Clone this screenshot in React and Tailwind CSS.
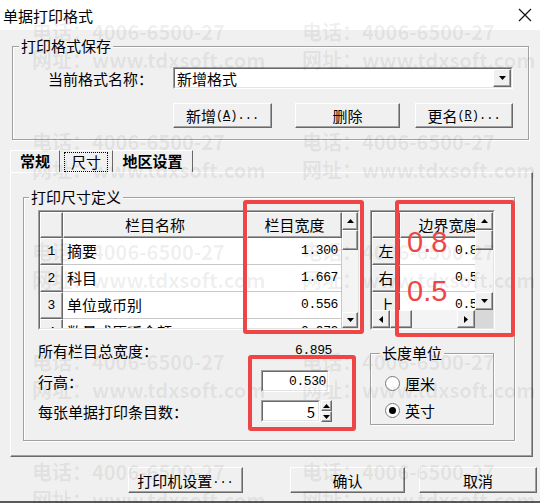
import React from 'react';

const cjk = "font-['Noto_Sans_CJK_SC',sans-serif]";
const mono = "font-['Liberation_Mono',monospace]";
const raised =
  'border border-t-white border-l-white border-r-[#696969] border-b-[#696969] shadow-[inset_-1px_-1px_0_#a0a0a0]';
const etched = 'border border-[#a0a0a0] shadow-[inset_1px_1px_0_#ffffff,1px_1px_0_#ffffff]';

// small black arrow used by scroll buttons, combo and spinner
function Tri({ dir }) {
  const pts = {
    up: '0,4 3.5,0 7,4',
    down: '0,0 7,0 3.5,4',
    left: '4,0 4,7 0,3.5',
    right: '0,0 0,7 4,3.5',
  }[dir];
  const vert = dir === 'up' || dir === 'down';
  return (
    <svg width={vert ? 7 : 4} height={vert ? 4 : 7} viewBox={vert ? '0 0 7 4' : '0 0 4 7'}>
      <polygon points={pts} fill="#000" />
    </svg>
  );
}

function Sunken({ className, children }) {
  return (
    <div className={`border border-t-[#a0a0a0] border-l-[#a0a0a0] border-r-white border-b-white ${className}`}>
      <div className="w-full h-full border border-t-[#696969] border-l-[#696969] border-r-[#e3e3e3] border-b-[#e3e3e3] bg-white overflow-hidden">
        {children}
      </div>
    </div>
  );
}

function Btn({ className, children }) {
  return (
    <div className={`${raised} bg-[#f0f0f0] flex items-center justify-center text-[15px] leading-none ${className}`}>
      {children}
    </div>
  );
}

function ScrollBtn({ dir, className }) {
  return (
    <div className={`${raised} bg-[#f0f0f0] flex items-center justify-center flex-none ${className}`}>
      <Tri dir={dir} />
    </div>
  );
}

function Legend({ children, className }) {
  return (
    <legend className={`px-[2px] bg-[#f0f0f0] text-[15px] leading-[18px] ${className}`}>{children}</legend>
  );
}

function ColumnGrid() {
  const rows = [
    ['1', '摘要', '1.300'],
    ['2', '科目', '1.667'],
    ['3', '单位或币别', '0.556'],
    ['4', '数量或原币金额', '0.972'],
  ];
  return (
    <Sunken className="w-[322px] h-[120px] flex-none">
      <div className="flex h-full">
        <div className="w-[302px] flex-none flex flex-col">
          <div className="flex h-[26px] flex-none">
            <div className={`${raised} w-[23px] bg-[#f0f0f0]`} />
            <div className={`${raised} w-[184px] bg-[#f0f0f0] flex items-center justify-center text-[15px]`}>栏目名称</div>
            <div className={`${raised} w-[95px] bg-[#f0f0f0] flex items-center justify-center text-[15px]`}>栏目宽度</div>
          </div>
          {rows.map(([n, name, val]) => (
            <div key={n} className="flex h-[27px] flex-none">
              <div className={`${raised} w-[23px] bg-[#f0f0f0] flex items-center justify-center text-[13px] ${mono}`}>{n}</div>
              <div className="w-[184px] border-r border-b border-[#c8c8c8] flex items-center pl-[4px] text-[15px] whitespace-nowrap">
                {name}
              </div>
              <div className={`w-[95px] border-r border-b border-[#c8c8c8] flex items-center justify-end pr-[3px] text-[13px] tracking-[-0.4px] ${mono}`}>
                {val}
              </div>
            </div>
          ))}
        </div>
        <div className="w-[16px] flex-none flex flex-col">
          <ScrollBtn dir="up" className="h-[18px]" />
          <div className={`${raised} h-[20px] bg-[#f0f0f0]`} />
          <div className="flex-1 bg-[#f4f4f4]" />
          <ScrollBtn dir="down" className="h-[16px]" />
        </div>
      </div>
    </Sunken>
  );
}

function MarginGrid() {
  const rows = [
    ['左', '0.800'],
    ['右', '0.500'],
    ['上', '0.500'],
  ];
  return (
    <Sunken className="w-[125px] h-[120px] flex-none">
      <div className="flex h-full">
        <div className="w-[103px] flex-none flex flex-col">
          <div className="h-[98px] flex-none overflow-hidden">
            <div className="flex h-[26px] w-[125px]">
              <div className={`${raised} w-[28px] flex-none bg-[#f0f0f0]`} />
              <div className={`${raised} w-[97px] flex-none bg-[#f0f0f0] flex items-center justify-center text-[15px]`}>边界宽度</div>
            </div>
            {rows.map(([side, val]) => (
              <div key={side} className="flex h-[27px] w-[125px]">
                <div className={`${raised} w-[28px] flex-none bg-[#f0f0f0] flex items-center justify-center text-[15px]`}>{side}</div>
                <div className={`w-[97px] flex-none border-b border-[#c8c8c8] flex items-center justify-end pr-[5px] text-[13px] tracking-[-0.4px] ${mono}`}>
                  {val}
                </div>
              </div>
            ))}
          </div>
          <div className="h-[18px] flex-none flex">
            <ScrollBtn dir="left" className="w-[18px]" />
            <div className={`${raised} w-[22px] flex-none bg-[#f0f0f0]`} />
            <div className="flex-1 bg-[#f4f4f4]" />
            <ScrollBtn dir="right" className="w-[18px]" />
          </div>
        </div>
        <div className="w-[18px] flex-none flex flex-col">
          <ScrollBtn dir="up" className="h-[18px]" />
          <div className={`${raised} h-[20px] flex-none bg-[#f0f0f0]`} />
          <div className="flex-1 bg-[#f4f4f4]" />
          <ScrollBtn dir="down" className="h-[18px]" />
          <div className="h-[18px] flex-none bg-[#d8d8d8]" />
        </div>
      </div>
    </Sunken>
  );
}

function Radio({ checked, label, className }) {
  return (
    <div className={`flex items-center h-[20px] ${className}`}>
      <div className="w-[15px] h-[15px] rounded-full border border-[#7a7a7a] bg-white flex items-center justify-center">
        {checked && <div className="w-[7px] h-[7px] rounded-full bg-black" />}
      </div>
      <span className="ml-[5px] text-[15px] leading-none">{label}</span>
    </div>
  );
}

// faint company stamp repeated across the dialog
function Watermark() {
  const tops = [0, 110, 220, 330, 440];
  return (
    <div className={`absolute inset-0 pointer-events-none ${cjk} font-bold text-[20px] leading-[28px] text-black/[0.07]`}>
      {tops.map((t) =>
        [32, 302].map((x) => (
          <React.Fragment key={`${t}-${x}`}>
            <div className="absolute whitespace-nowrap" style={{ left: x, top: 18 + t }}>电话：4006-6500-27</div>
            <div className="absolute whitespace-nowrap" style={{ left: x, top: 46 + t }}>网址：www.tdxsoft.com</div>
          </React.Fragment>
        ))
      )}
    </div>
  );
}

export default function App() {
  return (
    <div className={`relative w-[540px] h-[503px] bg-[#f0f0f0] overflow-hidden text-black ${cjk}`}>
      {/* title bar */}
      <div className="h-[30px] bg-white flex items-center justify-between pl-[3px] pr-[8px]">
        <span className="text-[15px] leading-none">单据打印格式</span>
        <svg width="14" height="14" viewBox="0 0 14 14">
          <path d="M1 1 L13 13 M13 1 L1 13" stroke="#111" strokeWidth="1.2" />
        </svg>
      </div>

      {/* saved formats */}
      <fieldset className={`${etched} ml-[12px] mt-[7px] w-[517px] h-[103px]`}>
        <Legend className="ml-[6px]">打印格式保存</Legend>
        <div className="flex items-center pl-[35px] mt-[12px]">
          <span className="w-[125px] text-[15px] leading-none">当前格式名称：</span>
          <Sunken className="w-[340px] h-[22px]">
            <div className="flex h-full items-center">
              <span className="flex-1 pl-[2px] text-[15px] leading-none">新增格式</span>
              <ScrollBtn dir="down" className="w-[18px] h-full" />
            </div>
          </Sunken>
        </div>
        <div className="flex pl-[160px] mt-[14px]">
          <Btn className="w-[99px] h-[25px]">
            新增<span className={`${mono} text-[12px]`}>(<u>A</u>)...</span>
          </Btn>
          <Btn className="w-[105px] h-[25px] ml-[23px]">删除</Btn>
          <Btn className="w-[98px] h-[25px] ml-[15px]">
            更名<span className={`${mono} text-[12px]`}>(<u>R</u>)...</span>
          </Btn>
        </div>
      </fieldset>

      {/* tabs */}
      <div className="flex ml-[10px] mt-[10px] h-[22px]">
        <div className="w-[50px] border-t border-l border-r border-t-white border-l-white border-r-[#696969] flex items-center justify-center text-[15px] font-bold">
          常规
        </div>
        <div className="w-[53px] border-t border-r border-t-white border-r-[#696969] flex items-center justify-center">
          <span className="border border-dotted border-black px-[6px] text-[15px] leading-[18px]">尺寸</span>
        </div>
        <div className="w-[80px] border-t border-r border-t-white border-r-[#696969] flex items-center justify-center text-[15px] font-bold">
          地区设置
        </div>
      </div>

      {/* tab page */}
      <div className={`${raised} ml-[10px] w-[523px] h-[285px] pt-[15px] pl-[12px]`}>
        <fieldset className={`${etched} w-[492px] h-[253px]`}>
          <Legend className="ml-[5px]">打印尺寸定义</Legend>
          <div className="flex pl-[14px] mt-[4px] gap-[10px]">
            <ColumnGrid />
            <MarginGrid />
          </div>
          <div className="flex pl-[14px]">
            <div className="w-[332px] flex-none text-[15px] leading-none">
              <div className="flex items-center h-[20px] mt-[10px]">
                <span className="w-[223px]">所有栏目总宽度：</span>
                <span className={`w-[71px] text-right text-[13px] tracking-[-0.4px] ${mono}`}>6.895</span>
              </div>
              <div className="flex items-center h-[22px] mt-[10px]">
                <span className="w-[223px]">行高：</span>
                <Sunken className="w-[68px] h-[22px]">
                  <div className={`h-full flex items-center justify-end pr-[1px] text-[13px] tracking-[-0.4px] ${mono}`}>0.530</div>
                </Sunken>
              </div>
              <div className="flex items-center h-[22px] mt-[8px]">
                <span className="w-[223px]">每张单据打印条目数：</span>
                <Sunken className="w-[59px] h-[22px]">
                  <div className="h-full flex items-center justify-end pr-[3px] text-[15px]">5</div>
                </Sunken>
                <div className="w-[11px] h-[22px] ml-[1px] flex flex-col">
                  <ScrollBtn dir="up" className="h-[11px]" />
                  <ScrollBtn dir="down" className="h-[11px]" />
                </div>
              </div>
            </div>
            <fieldset className={`${etched} w-[124px] h-[81px] mt-[14px]`}>
              <Legend className="ml-[9px]">长度单位</Legend>
              <Radio label="厘米" className="pl-[14px] mt-[11px]" />
              <Radio checked label="英寸" className="pl-[14px] mt-[7px]" />
            </fieldset>
          </div>
        </fieldset>
      </div>

      {/* dialog buttons */}
      <div className="flex mt-[10px]">
        <Btn className="w-[115px] h-[26px] ml-[128px]">
          打印机设置<span className={`${mono} text-[12px]`}>...</span>
        </Btn>
        <Btn className="w-[115px] h-[26px] ml-[47px]">确认</Btn>
        <Btn className="w-[118px] h-[26px] ml-[14px] flex-none">取消</Btn>
      </div>
      <div className="mt-[8px] h-[2px] bg-[#5a5a5a]" />

      <Watermark />

      {/* red markup boxes */}
      <div className="absolute left-[243px] top-[200px] w-[121px] h-[134px] border-4 border-[#ee4646] rounded-[3px]" />
      <div className="absolute left-[395px] top-[200px] w-[120px] h-[137px] border-4 border-[#ee4646] rounded-[3px]" />
      <div className="absolute left-[248px] top-[355px] w-[108px] h-[76px] border-4 border-[#ee4646] rounded-[3px]" />
      <div className="absolute left-[407px] top-[228px] text-[29px] leading-none text-[#ee4646] font-['Liberation_Sans',sans-serif]">0.8</div>
      <div className="absolute left-[407px] top-[277px] text-[29px] leading-none text-[#ee4646] font-['Liberation_Sans',sans-serif]">0.5</div>
    </div>
  );
}
